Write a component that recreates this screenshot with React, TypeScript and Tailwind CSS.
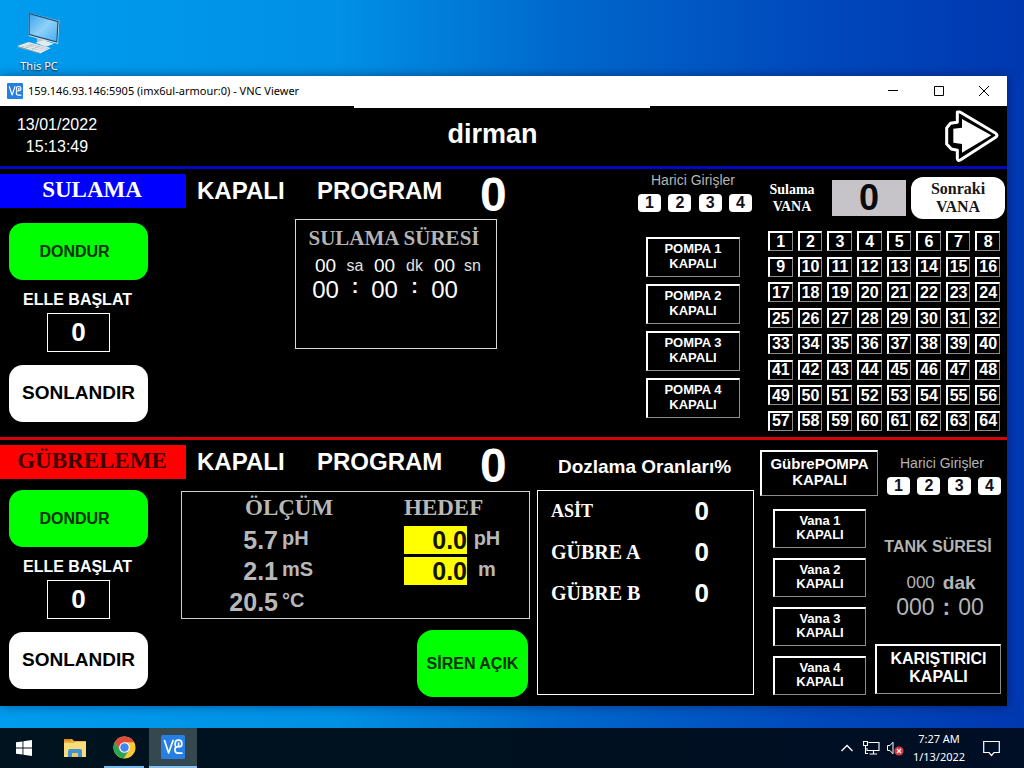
import type { ReactNode } from "react";

const sans = "font-['Liberation_Sans',Arial,sans-serif]";
const serif = "font-['Liberation_Serif','Times_New_Roman',serif]";

const boxBorder =
  "border-t-2 border-l-2 border-r border-b border-t-white border-l-white border-r-[#8c8c8c] border-b-[#8c8c8c]";

function VncLogo({ size }: { size: number }) {
  return (
    <svg width={size} height={size} viewBox="0 0 24 24" aria-hidden="true">
      <rect width="24" height="24" rx="1.5" fill="#2680e4" />
      <g fill="none" stroke="#fff" strokeWidth="1.7" strokeLinejoin="round" strokeLinecap="round">
        <path d="M3.5 5.5 7.6 18 12 5.5" />
        <path d="M14.2 10.5V8.2q0-3 3-3h.6q3 0 3 3v1.2q0 2.3-2.6 2.3h-1.4q-2.8 0-2.8 2.6v.7q0 3.2 3.2 3.2h3.6" />
        <path d="M17.6 8v3.5" />
      </g>
    </svg>
  );
}

function ThisPcIcon() {
  return (
    <svg width="46" height="44" viewBox="0 0 138 132" aria-hidden="true">
      <defs>
        <linearGradient id="screen" x1="0" y1="0" x2="1" y2="1">
          <stop offset="0" stopColor="#3aa6ee" />
          <stop offset="0.5" stopColor="#8fd0f8" />
          <stop offset="1" stopColor="#45aef0" />
        </linearGradient>
      </defs>
      <path d="M62 84 92 90 90 102 64 98Z" fill="#b9c4cc" />
      <path d="M58 98 82 91 114 101 90 110Z" fill="#e6ebee" />
      <path d="M38 8 130 32 126 102 38 78Z" fill="#d8e2e8" />
      <path d="M38 8 128 33 124 98 38 75Z" fill="#1c4d74" />
      <path d="M41 13 124 36 121 94 41 72Z" fill="url(#screen)" />
      <path d="M4 108 38 96 104 114 74 130Z" fill="#eef1f3" />
      <path d="M16 108 82 123M26 104 90 119M36 101 96 116M28 114 54 102M48 119 72 107" stroke="#aeb6bc" strokeWidth="2" />
      <path d="M4 108V112L74 132V129Z" fill="#9aa4ab" />
    </svg>
  );
}

function NextArrow() {
  return (
    <svg width="54" height="52" viewBox="0 0 162 156" aria-hidden="true">
      <path
        d="M37 6H45L152 70Q160 76 152 82L46 150Q38 154 37 146V121L19 117L5 102V54L16 40L37 37Z"
        fill="#000"
        stroke="#fff"
        strokeWidth="9"
        strokeLinejoin="round"
      />
      <path d="M51 27 139 76 51 128V102L25 98V56L51 53Z" fill="#fff" />
    </svg>
  );
}

function Heading({ idle, label, value }: { idle: string; label: string; value: number }) {
  return (
    <div className="flex h-[49px] shrink-0 pl-4 font-bold">
      <span className="w-[120px] pt-2 text-[24px] leading-[26px]">{idle}</span>
      <span className="w-[163px] pt-2 text-[24px] leading-[26px]">{label}</span>
      <span className="text-[48px] leading-[50px]">{value}</span>
    </div>
  );
}

function SidePanel({
  title,
  titleClass,
  firstGap,
  id,
}: {
  title: string;
  titleClass: string;
  firstGap: string;
  id: string;
}) {
  return (
    <div className="flex w-[181px] shrink-0 flex-col pt-1 font-bold">
      <h2 className={`h-[34px] w-[186px] pr-0.5 text-center text-[23px] leading-[31px] ${serif} ${titleClass}`}>{title}</h2>
      <div className={`ml-[9px] flex w-[139px] flex-col items-center ${firstGap}`}>
        <button className="h-[57px] w-full rounded-[14px] bg-[#00ff00] pr-2 text-base text-[#06300a]">DONDUR</button>
        <label htmlFor={id} className="h-[33px] pt-2 pr-0.5 text-base leading-6 whitespace-nowrap">
          ELLE BAŞLAT
        </label>
        <input
          id={id}
          defaultValue="0"
          className="h-[39px] w-[63px] border border-white bg-black text-center text-[26px] leading-8 font-bold text-white"
        />
        <button className="mt-[13px] h-[57px] w-full rounded-[14px] bg-white text-[19px] text-black">SONLANDIR</button>
      </div>
    </div>
  );
}

function ExternalInputs() {
  return (
    <div className="flex w-[114px] flex-col items-center">
      <h3 className="pr-1 text-sm leading-5 whitespace-nowrap text-[#b4b4b4]">Harici Girişler</h3>
      <div className="mt-1 flex w-full justify-between">
        {[1, 2, 3, 4].map((n) => (
          <span
            key={n}
            className="h-[18px] w-[23px] rounded bg-white text-center text-base leading-[18px] font-bold text-[#101018]"
          >
            {n}
          </span>
        ))}
      </div>
    </div>
  );
}

function StateBox({ name, className }: { name: string; className: string }) {
  return (
    <button className={`flex flex-col items-center font-bold whitespace-nowrap ${boxBorder} ${className}`}>
      <span>{name}</span>
      <span>KAPALI</span>
    </button>
  );
}

function DurationUnit({ children }: { children: ReactNode }) {
  return <span className="text-base leading-6 text-[#e0e0e0]">{children}</span>;
}

function Irrigation() {
  const valves = Array.from({ length: 64 }, (_, i) => i + 1);
  return (
    <section className="flex h-[267px] pr-0.5">
      <SidePanel title="SULAMA" titleClass="bg-[#0000ff] text-white" firstGap="mt-[15px]" id="sulama-elle" />
      <div className="flex-1">
        <Heading idle="KAPALI" label="PROGRAM" value={0} />
        <div className="ml-[114px] h-[130px] w-[202px] border border-[#d8d8d8]">
          <h3 className={`pt-1 pr-1 text-center text-[21px] leading-7 font-bold text-[#b4b4b4] ${serif}`}>
            SULAMA SÜRESİ
          </h3>
          <div className="mt-0.5 grid grid-cols-[27px_32px_27px_33px_27px_29px] justify-items-center pl-4">
            <span className="text-[19px] leading-6">00</span>
            <DurationUnit>sa</DurationUnit>
            <span className="text-[19px] leading-6">00</span>
            <DurationUnit>dk</DurationUnit>
            <span className="text-[19px] leading-6">00</span>
            <DurationUnit>sn</DurationUnit>
            <span className="text-2xl leading-6">00</span>
            <span className="text-xl leading-4 font-bold">:</span>
            <span className="text-2xl leading-6">00</span>
            <span className="text-xl leading-4 font-bold">:</span>
            <span className="text-2xl leading-6">00</span>
          </div>
        </div>
      </div>
      <div className="flex w-[114px] shrink-0 flex-col items-center">
        <ExternalInputs />
        <div className="mt-[25px] flex flex-col gap-[7px] pr-[5px]">
          {[1, 2, 3, 4].map((n) => (
            <StateBox key={n} name={`POMPA ${n}`} className="h-10 w-[94px] pt-0.5 text-[13px] leading-[15px]" />
          ))}
        </div>
      </div>
      <div className="ml-4 w-[237px] shrink-0 pt-[7px]">
        <div className="flex h-[42px] items-center">
          <label
            htmlFor="valve"
            className={`w-12 shrink-0 text-center text-sm leading-[17px] font-bold ${serif}`}
          >
            Sulama VANA
          </label>
          <input
            id="valve"
            defaultValue="0"
            className="ml-4 h-9 w-[74px] bg-[#c6c4c8] text-center text-4xl leading-9 font-bold text-[#0a0a0a]"
          />
          <button
            className={`ml-[5px] h-[42px] w-[94px] rounded-xl bg-white px-4 text-base leading-[18px] font-bold text-[#181818] ${serif}`}
          >
            Sonraki VANA
          </button>
        </div>
        <div className="mt-3 grid h-[200px] w-[232px] grid-cols-8 content-between gap-x-[5px]">
          {valves.map((n) => (
            <button
              key={n}
              className={`flex h-5 items-center justify-center text-base leading-4 font-bold ${boxBorder}`}
            >
              {n}
            </button>
          ))}
        </div>
      </div>
    </section>
  );
}

const measured = [
  { value: "5.7", unit: "pH" },
  { value: "2.1", unit: "mS" },
  { value: "20.5", unit: "°C" },
];

const targets = [
  { value: "0.0", unit: "pH" },
  { value: "0.0", unit: "m" },
];

const doses = [
  { name: "ASİT", size: "text-lg", value: 0 },
  { name: "GÜBRE A", size: "text-xl", value: 0 },
  { name: "GÜBRE B", size: "text-xl", value: 0 },
];

function Fertilizing() {
  return (
    <section className="flex h-[265px] pr-1.5">
      <SidePanel title="GÜBRELEME" titleClass="bg-[#ff0000] text-[#3c0000]" firstGap="mt-[11px]" id="gubre-elle" />
      <div className="flex flex-1 flex-col">
        <Heading idle="KAPALI" label="PROGRAM" value={0} />
        <div className="mt-px flex h-32 border border-[#d0d0d0] font-bold text-[#b8b8b8]">
          <div className="w-[222px] shrink-0">
            <h3 className={`pl-[63px] text-[23px] leading-8 ${serif}`}>ÖLÇÜM</h3>
            {measured.map((m) => (
              <div key={m.unit} className="flex h-[31px] items-center">
                <span className="w-24 text-right text-[25px] leading-7">{m.value}</span>
                <span className="ml-1 pb-1 text-xl leading-6">{m.unit}</span>
              </div>
            ))}
          </div>
          <div>
            <h3 className={`text-[23px] leading-8 ${serif}`}>HEDEF</h3>
            {targets.map((t) => (
              <label key={t.unit} className="flex h-[31px] items-center">
                <input
                  defaultValue={t.value}
                  className="h-7 w-[63px] bg-[#ffff00] text-right text-[25px] leading-7 font-bold text-[#141400]"
                />
                <span className="w-10 pb-1 text-center text-xl leading-6">{t.unit}</span>
              </label>
            ))}
          </div>
        </div>
        <button className="mt-[11px] mr-0.5 h-[67px] w-[111px] self-end rounded-2xl bg-[#00ff00] text-base font-bold whitespace-nowrap text-[#06300a]">
          SİREN AÇIK
        </button>
      </div>
      <div className="ml-[7px] w-[217px] shrink-0 font-bold">
        <h3 className="h-[49px] pt-3.5 pr-0.5 text-center text-[19px] leading-6 whitespace-nowrap">Dozlama Oranları%</h3>
        <div className="flex h-[205px] flex-col gap-px border border-white pr-11 pl-[13px]">
          {doses.map((d) => (
            <div key={d.name} className="flex h-10 items-center justify-between">
              <span className={`${serif} ${d.size}`}>{d.name}</span>
              <span className="text-[26px] leading-8">{d.value}</span>
            </div>
          ))}
        </div>
      </div>
      <div className="ml-1.5 w-[115px] shrink-0 pt-[9px]">
        <StateBox name="GübrePOMPA" className="h-[46px] w-[118px] pt-1 text-[15px] leading-4" />
        <div className="mt-[13px] ml-[13px] flex flex-col gap-[10px]">
          {[1, 2, 3, 4].map((n) => (
            <StateBox key={n} name={`Vana ${n}`} className="h-[39px] w-[93px] pt-[3px] text-[13px] leading-[14px]" />
          ))}
        </div>
      </div>
      <div className="flex w-[126px] shrink-0 flex-col items-end pt-3">
        <ExternalInputs />
        <div className="mt-10 flex w-full flex-col items-center text-[#b4b4b4]">
          <h3 className="text-base leading-6 font-bold whitespace-nowrap">TANK SÜRESİ</h3>
          <p className="mt-3 flex gap-2 pl-1.5 leading-6">
            <span className="text-[17px]">000</span>
            <span className="text-[19px] font-bold">dak</span>
          </p>
          <p className="flex gap-2 pl-1 text-[23px] leading-6">
            <span>000</span>
            <span className="font-bold">:</span>
            <span>00</span>
          </p>
        </div>
        <StateBox name="KARIŞTIRICI" className="mt-[25px] h-[50px] w-full pt-1 text-base leading-[18px]" />
      </div>
    </section>
  );
}

function VncWindow() {
  return (
    <main className="mr-[17px] bg-black shadow-[0_0_10px_rgba(0,0,40,0.45)]">
      <div className="flex h-[30px] items-center bg-white pl-[7px] text-black">
        <VncLogo size={16} />
        <h1 className="ml-[5px] flex-1 font-['Noto_Sans','Open_Sans',sans-serif] text-[11px]">
          159.146.93.146:5905 (imx6ul-armour:0) - VNC Viewer
        </h1>
        <button aria-label="Minimize" className="flex h-full w-[46px] items-center justify-center">
          <svg width="10" height="10" viewBox="0 0 10 10" stroke="#000" fill="none">
            <path d="M0 4.5H10" />
          </svg>
        </button>
        <button aria-label="Maximize" className="flex h-full w-[45px] items-center justify-center">
          <svg width="10" height="10" viewBox="0 0 10 10" stroke="#000" fill="none">
            <path d="M.5.5H9.5V9.5H.5Z" />
          </svg>
        </button>
        <button aria-label="Close" className="flex h-full w-[46px] items-center justify-center">
          <svg width="10" height="10" viewBox="0 0 10 10" stroke="#000" fill="none">
            <path d="M0 0 10 10M10 0 0 10" />
          </svg>
        </button>
      </div>
      <div className={`text-white ${sans}`}>
        <header className="relative flex h-[60px] items-center justify-between">
          <div className="absolute top-0 left-[354px] h-0.5 w-[296px] bg-white" />
          <p className="w-[108px] pl-1.5 text-center text-base leading-[22px]">
            13/01/2022
            <br />
            15:13:49
          </p>
          <p className="flex-1 pr-[68px] pb-1 text-center text-[27px] leading-8 font-bold">dirman</p>
          <button aria-label="Sonraki sayfa" className="mr-2">
            <NextArrow />
          </button>
        </header>
        <div className="h-1 border-b border-black bg-[#0008c0]" />
        <Irrigation />
        <div className="h-1 border-b border-black bg-[#d4040c]" />
        <Fertilizing />
      </div>
    </main>
  );
}

function Taskbar() {
  return (
    <footer className="flex h-10 items-stretch bg-[linear-gradient(to_right,#00131e,#001020_60%,#000e26)] font-['Noto_Sans','Open_Sans',sans-serif] text-white">
      <button aria-label="Start" className="flex w-12 items-center justify-center">
        <svg width="16" height="16" viewBox="0 0 16 16" fill="#fff">
          <path d="M0 2.3 6.5 1.4V7.6H0ZM7.4 1.2 16 0V7.6H7.4ZM0 8.4H6.5V14.6L0 13.7ZM7.4 8.4H16V16L7.4 14.8Z" />
        </svg>
      </button>
      <button aria-label="File Explorer" className="ml-[3px] flex w-12 items-center justify-center">
        <svg width="22" height="18" viewBox="0 0 22 18">
          <path d="M0 0H8L10 2H22V18H0Z" fill="#e8b23c" />
          <path d="M0 4H10L12 3H22V18H0Z" fill="#fbdc78" />
          <path d="M0 0H7V2H0Z" fill="#d88f20" />
          <path d="M4 18V12Q4 10 6 10H16Q18 10 18 12V18H14V14H8V18Z" fill="#3e94d4" />
          <path d="M8 14H14V18H8Z" fill="#f0c860" />
        </svg>
      </button>
      <button
        aria-label="Google Chrome"
        className="ml-[5px] flex w-10 items-center justify-center border-b-2 border-[#76b9ed]"
      >
        <svg width="23" height="23" viewBox="0 0 24 24">
          <circle cx="12" cy="12" r="11.5" fill="#fcc934" />
          <path d="M2 6.3A11.5 11.5 0 0 0 11 23.4L16.8 14.8 12 12 7.2 14.8Z" fill="#2aa352" />
          <path d="M2 6.3A11.5 11.5 0 0 1 22 6.5H12L7.2 14.8Z" fill="#dd4b3e" />
          <circle cx="12" cy="12" r="5.6" fill="#fff" />
          <circle cx="12" cy="12" r="4.4" fill="#4385f0" />
        </svg>
      </button>
      <button
        aria-label="VNC Viewer"
        className="ml-[5px] flex w-12 items-center justify-center border-b-2 border-[#86c0ee] bg-[#35474f]"
      >
        <VncLogo size={24} />
      </button>
      <div className="ml-auto flex items-center">
        <svg width="12" height="8" viewBox="0 0 12 8" fill="none" stroke="#fff" strokeWidth="1.3">
          <path d="M.5 7 6 1.5 11.5 7" />
        </svg>
        <svg className="ml-[10px]" width="17" height="14" viewBox="0 0 17 14" fill="none" stroke="#fff" strokeWidth="1.1">
          <path d="M5.5 1.5H16V9.5H4V7M10.5 9.5V13M6.5 13H14M.5.5H4.5V4.5H.5ZM2.5 4.5V12.5H5" />
        </svg>
        <svg className="ml-[7px]" width="17" height="15" viewBox="0 0 17 15" fill="none">
          <path d="M.5 4.5H3L6 1.2V12.8L3 9.5H.5Z" stroke="#fff" />
          <circle cx="12" cy="10" r="4.6" fill="#d8383c" />
          <path d="M10 8 14 12M14 8 10 12" stroke="#fff" strokeWidth="1.2" />
        </svg>
        <p className="ml-2 w-[54px] text-center text-[11px] leading-[18px] whitespace-nowrap">
          7:27 AM
          <br />
          1/13/2022
        </p>
        <svg className="mr-6 ml-[17px]" width="17" height="17" viewBox="0 0 17 17" fill="none" stroke="#fff" strokeWidth="1.2">
          <path d="M.7 1.5H16.3V12.5H11L8.5 15.5 6 12.5H.7Z" />
        </svg>
      </div>
    </footer>
  );
}

export default function App() {
  return (
    <div className="flex min-h-screen flex-col bg-[linear-gradient(to_right,#009cee,#0090e6_33%,#0068cc_55%,#0048bc_80%,#0038b0)]">
      <div className="h-[76px] pt-2.5 pl-[9px]">
        <a href="#this-pc" className="flex w-[60px] flex-col items-center">
          <ThisPcIcon />
          <span className="font-['Noto_Sans','Open_Sans',sans-serif] text-[11px] leading-6 whitespace-nowrap text-white [text-shadow:0_1px_2px_#000]">
            This PC
          </span>
        </a>
      </div>
      <VncWindow />
      <div className="mt-auto pt-[22px]">
        <Taskbar />
      </div>
    </div>
  );
}
